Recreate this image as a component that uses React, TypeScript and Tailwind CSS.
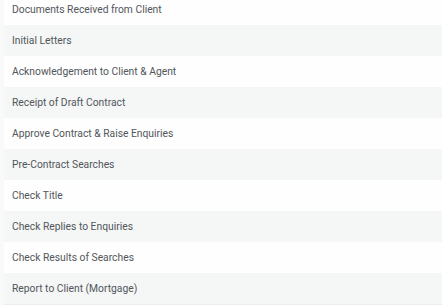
const steps = [
  "Documents Received from Client",
  "Initial Letters",
  "Acknowledgement to Client & Agent",
  "Receipt of Draft Contract",
  "Approve Contract & Raise Enquiries",
  "Pre-Contract Searches",
  "Check Title",
  "Check Replies to Enquiries",
  "Check Results of Searches",
  "Report to Client (Mortgage)",
];

export default function App() {
  return (
    <div className="w-[442px] h-[308px] overflow-hidden bg-white" style={{ fontFamily: "Roboto, 'Liberation Sans', sans-serif" }}>
      <div className="-mt-[6px] pl-[4px] bg-[#f9f9f9]">
        <div className="border-b border-[#ececec]">
          {steps.map((s, i) => (
            <div
              key={s}
              className={`h-[31px] flex items-center pl-[8px] pt-[1px] text-[10.3px] text-[#51565a] ${i % 2 === 1 ? "bg-[#f5f6f6]" : "bg-[#fefefe]"}`}
            >
              {s}
            </div>
          ))}
        </div>
      </div>
    </div>
  );
}
